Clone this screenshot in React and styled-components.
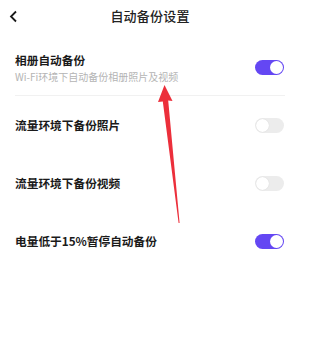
import React from "react";
import styled, { createGlobalStyle } from "styled-components";

const Global = createGlobalStyle`
  html, body { margin: 0; padding: 0; background: #fff; }
  body { font-family: "Noto Sans CJK SC", "Noto Sans", sans-serif; }
`;

const Page = styled.div`
  position: relative;
  width: 300px;
  height: 347px;
  background: #fff;
  overflow: hidden;
`;

const Header = styled.div`
  height: 32px;
  display: grid;
  grid-template-columns: 40px 1fr 40px;
  align-items: center;
`;

const Back = styled.div`
  display: flex;
  align-items: center;
  padding-left: 9px;
  height: 100%;
`;

const Title = styled.div`
  text-align: center;
  font-size: 13px;
  font-weight: 500;
  color: #222;
  line-height: 16px;
  letter-spacing: 0.2px;
`;

const List = styled.div`
  padding: 0 15px;
`;

const Row = styled.div`
  display: flex;
  align-items: center;
  justify-content: space-between;
  box-sizing: border-box;
  height: ${(p) => (p.$tall ? "64px" : "58px")};
  padding: ${(p) => (p.$tall ? "19px 0 12px" : "0")};
  border-bottom: ${(p) => (p.$divider ? "1px solid #f1f1f1" : "none")};
`;

const Texts = styled.div`
  display: flex;
  flex-direction: column;
  gap: 2px;
`;

const Label = styled.div`
  font-size: 11.7px;
  font-weight: 700;
  color: #1a1a1a;
  line-height: 16px;
`;

const Sub = styled.div`
  font-size: 10px;
  color: #b4b4b4;
  line-height: 13px;
`;

const Track = styled.div`
  width: 29px;
  height: 15px;
  border-radius: 8px;
  background: ${(p) => (p.$on ? "#6447f3" : "#ececec")};
  display: flex;
  align-items: center;
  justify-content: ${(p) => (p.$on ? "flex-end" : "flex-start")};
  padding: 0 1px;
  box-sizing: border-box;
  margin-right: 1px;
`;

const Knob = styled.div`
  width: 13px;
  height: 13px;
  border-radius: 50%;
  background: #fff;
  box-shadow: ${(p) => (p.$on ? "none" : "0 0 1px rgba(0,0,0,0.15)")};
`;

const Overlay = styled.svg`
  position: absolute;
  left: 0;
  top: 0;
  pointer-events: none;
`;

const Toggle = ({ on }) => (
  <Track $on={on}>
    <Knob $on={on} />
  </Track>
);

export default function App() {
  return (
    <>
      <Global />
      <Page>
        <Header>
          <Back>
            <svg width="9" height="13" viewBox="0 0 9 13">
              <path d="M7 1.5 L2 6.5 L7 11.5" fill="none" stroke="#1a1a1a" strokeWidth="1.8" />
            </svg>
          </Back>
          <Title>自动备份设置</Title>
          <div />
        </Header>
        <List>
          <Row $tall $divider>
            <Texts>
              <Label>相册自动备份</Label>
              <Sub>Wi-Fi环境下自动备份相册照片及视频</Sub>
            </Texts>
            <Toggle on />
          </Row>
          <Row>
            <Label>流量环境下备份照片</Label>
            <Toggle />
          </Row>
          <Row>
            <Label>流量环境下备份视频</Label>
            <Toggle />
          </Row>
          <Row>
            <Label>电量低于15%暂停自动备份</Label>
            <Toggle on />
          </Row>
        </List>
        <Overlay width="300" height="347" viewBox="0 0 300 347">
          <polygon
            points="164.5,85 172.5,101 168.2,100.5 179.6,223 178.6,223 162.8,101.5 158,102"
            fill="#ec2f3b"
          />
        </Overlay>
      </Page>
    </>
  );
}
